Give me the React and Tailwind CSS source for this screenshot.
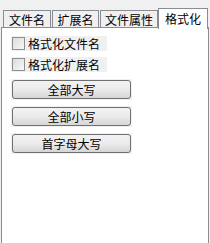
const font = { fontFamily: '"Noto Sans CJK SC", "Noto Sans", sans-serif' };

const tabs = [
  { label: "文件名", w: "w-[48px]" },
  { label: "扩展名", w: "w-[47px]" },
  { label: "文件属性", w: "w-[58px]" },
];

const CheckRow = ({ label }) => (
  <div className="flex items-center h-[15px] w-[96px] bg-[#f0f0f0]">
    <span className="ml-[1px] w-[13px] h-[13px] border border-[#8e8f8f] bg-gradient-to-br from-[#dcdcdc] to-[#f8f8f8]"></span>
    <span className="ml-[3px] text-[12px] leading-[15px] text-black">{label}</span>
  </div>
);

const Btn = ({ label }) => (
  <div className="w-[121px] h-[21px] bg-[#f0f0f0] flex items-center justify-center">
    <button className="w-[119px] h-[19px] rounded-[3px] border border-[#707070] bg-gradient-to-b from-[#f2f2f2] via-[#ebebeb] to-[#d6d6d6] text-[12px] leading-[17px] text-black">
      {label}
    </button>
  </div>
);

export default function App() {
  return (
    <div className="w-[210px] h-[243px] bg-[#f0f0f0] overflow-hidden" style={font}>
      <div className="flex items-end pt-[7px] pl-[3px] h-[28px]">
        {tabs.map((t, i) => (
          <div
            key={t.label}
            className={`${t.w} ${i > 0 ? "ml-[1px]" : ""} h-[17px] border border-b-0 border-[#898c95] bg-[#f0f0f0] flex items-center justify-center text-[12px] leading-[15px] text-black mb-[1px]`}
          >
            {t.label}
          </div>
        ))}
        <div className="w-[50px] h-[21px] border border-b-0 border-[#898c95] bg-white flex items-start justify-center pt-[2px] text-[12px] leading-[15px] text-black relative z-10 -mb-[1px]">
          格式化
        </div>
      </div>
      <div className="ml-[1px] w-[208px] h-[220px] -mt-[1px] border border-[#898c95] bg-white flex flex-col pl-[9px] pt-[8px]">
        <div className="flex flex-col gap-[6px]">
          <CheckRow label="格式化文件名" />
          <CheckRow label="格式化扩展名" />
        </div>
        <div className="flex flex-col gap-[6px] mt-[7px]">
          <Btn label="全部大写" />
          <Btn label="全部小写" />
          <Btn label="首字母大写" />
        </div>
      </div>
    </div>
  );
}
